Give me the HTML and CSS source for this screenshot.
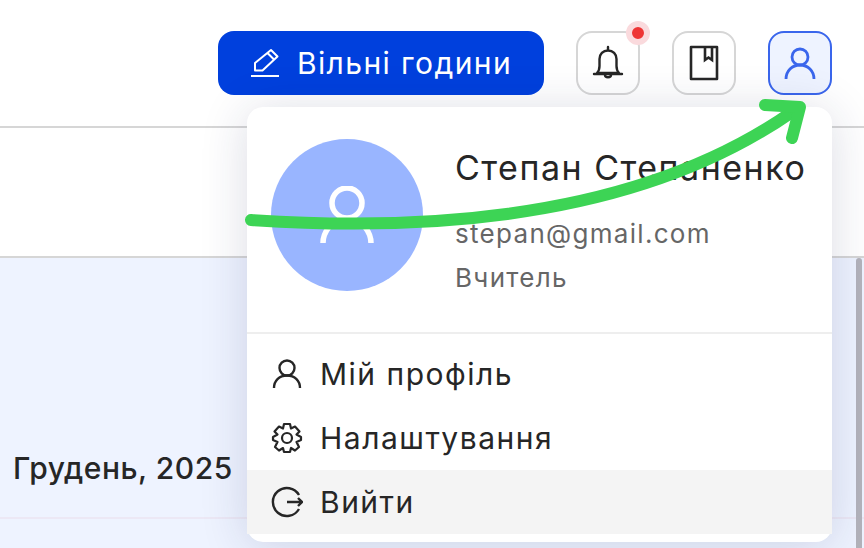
FILE: index.html

```html
<!DOCTYPE html>
<html lang="uk">

<head>
  <meta charset="UTF-8" />
  <meta name="viewport" content="width=device-width, initial-scale=1.0" />
  <title>Профіль</title>
  <link rel="stylesheet" href="styles.css">
</head>

<body>
  <header class="topbar">
    <button class="free-hours">
      <svg class="free-hours-icon" viewBox="0 0 30 30" fill="none" stroke="#fff" stroke-width="2">
        <path d="M1 28H29" />
        <path d="M5 22.500V15L21 2L27.500 8.500L12.500 22.500ZM17.500 5L24 11.500" stroke-linejoin="round" />
      </svg>
      Вільні години
    </button>
    <button class="icon-btn">
      <svg viewBox="0 0 32 36" width="32" height="36" fill="none" stroke="#262626" stroke-width="2.400">
        <path d="M16 2V5M5 28C7 26 7.500 24 7.500 21V14C7.500 9 11 5.500 16 5.500S24.500 9 24.500 14V21C24.500 24 25 26 27 28ZM2 29H30" stroke-linecap="round" stroke-linejoin="round" />
        <path d="M13 30C13 33 19 33 19 30" />
      </svg>
      <span class="dot"></span>
    </button>
    <button class="icon-btn">
      <svg viewBox="0 0 30 36" width="30" height="36" fill="none" stroke="#262626" stroke-width="2.600">
        <path d="M2 2H28V34H2Z" stroke-linejoin="round" />
        <path d="M16 2V15L19.500 12.500L23 15V2" />
      </svg>
    </button>
    <button class="icon-btn active">
      <svg viewBox="0 0 32 32" width="32" height="32" fill="none" stroke="#3a66ec" stroke-width="2.800">
        <circle cx="16" cy="10" r="8" />
        <path d="M2 32C2 24 8 18 16 18S30 24 30 32" />
      </svg>
    </button>
  </header>

  <div class="subbar"></div>

  <main class="content">
    <h2 class="month">Грудень, 2025</h2>
  </main>

  <div class="scrollbar"></div>

  <div class="menu">
    <div class="menu-user">
      <div class="avatar">
        <svg viewBox="0 0 54 58" width="54" height="58" fill="none" stroke="#fff" stroke-width="5.500">
          <circle cx="27" cy="17" r="15" />
          <path d="M3 57C3 48 10 33 27 33S51 48 51 57" />
        </svg>
      </div>
      <div class="user-info">
        <div class="user-name">Степан Степаненко</div>
        <div class="user-line">stepan@gmail.com</div>
        <div class="user-line">Вчитель</div>
      </div>
    </div>
    <div class="menu-list">
      <a class="menu-item">
        <svg viewBox="0 0 32 32" width="32" height="32" fill="none" stroke="#262626" stroke-width="2.400">
          <circle cx="16" cy="10" r="7.500" />
          <path d="M3 30C3 23 8 17.500 16 17.500S29 23 29 30" />
        </svg>
        Мій профіль
      </a>
      <a class="menu-item">
        <svg viewBox="0 0 32 32" width="32" height="32" fill="none" stroke="#262626" stroke-width="2.200" stroke-linejoin="round">
          <circle cx="16" cy="16" r="5" />
          <path d="M13 2H19L20 6.500L24 4.500L28.500 9.500L25.500 12.500L30 15V18L25.500 20L28 25L24 28.500L20 26L19 30H13L12 26L8 28.500L4 25L6.500 20L2 18V15L6.500 12.500L3.500 9.500L8 4.500L12 6.500Z" />
        </svg>
        Налаштування
      </a>
      <a class="menu-item hover">
        <svg viewBox="0 0 32 32" width="32" height="32" fill="none" stroke="#262626" stroke-width="2.400">
          <path d="M28 9A14 14 0 1 0 28 23" />
          <path d="M16 16H31M27 12L31 16L27 20" />
        </svg>
        Вийти
      </a>
    </div>
  </div>

  <svg class="arrow" viewBox="0 0 864 548" fill="none" stroke="#3dd455" stroke-width="12" stroke-linecap="round" stroke-linejoin="round">
    <path d="M251 220C430 232 640 218 792 112" />
    <path d="M765 105L800 107L792 138" />
  </svg>
</body>

</html>
```

FILE: styles.css

```css
* {
  box-sizing: border-box;
}

body {
  margin: 0;
  padding: 0;
  height: 548px;
  overflow: hidden;
  display: flex;
  flex-direction: column;
  font-family: "Inter", "Noto Sans", sans-serif;
  background: #fff;
  color: #262626;
}

.topbar {
  height: 128px;
  padding: 31px 32px 0 0;
  display: flex;
  justify-content: flex-end;
  align-items: flex-start;
  gap: 32px;
  border-bottom: 2px solid #d6d6d6;
}

.free-hours {
  width: 326px;
  height: 64px;
  display: flex;
  align-items: center;
  justify-content: center;
  gap: 17px;
  padding: 0;
  background: #0040dd;
  color: #fff;
  border: none;
  border-radius: 16px;
  font-family: inherit;
  font-size: 30px;
  letter-spacing: 1.4px;
}

.free-hours-icon {
  width: 30px;
  height: 30px;
}

.icon-btn {
  position: relative;
  width: 64px;
  height: 64px;
  display: flex;
  align-items: center;
  justify-content: center;
  padding: 0;
  background: #fff;
  border: 2px solid #d6d6d6;
  border-radius: 16px;
}

.icon-btn.active {
  background: #eef3ff;
  border-color: #3a66ec;
}

.dot {
  position: absolute;
  top: -12px;
  right: -12px;
  width: 12px;
  height: 12px;
  box-sizing: content-box;
  background: #ee3535;
  border: 6px solid #fadadd;
  border-radius: 50%;
}

.subbar {
  height: 130px;
  border-bottom: 2px solid #d6d6d6;
}

.content {
  flex: 1;
  background: #eef3ff;
  padding-top: 190px;
}

.month {
  margin: 0;
  padding: 0 0 27px 13px;
  height: 71px;
  font-size: 30px;
  font-weight: 500;
  line-height: 40px;
  letter-spacing: 0.5px;
  border-bottom: 2px solid #ece8f5;
}

.scrollbar {
  position: absolute;
  top: 258px;
  right: 2px;
  width: 6px;
  height: 290px;
  background: #b3b3bb;
  border-radius: 3px 3px 0 0;
}

.menu {
  position: absolute;
  top: 107px;
  left: 247px;
  width: 585px;
  height: 435px;
  background: #fff;
  border-radius: 16px;
  box-shadow: 0 4px 48px rgba(30, 40, 90, 0.16);
}

.menu-user {
  height: 227px;
  padding: 32px 24px 0;
  display: flex;
  gap: 32px;
  border-bottom: 2px solid #eeeeee;
}

.avatar {
  flex: none;
  width: 152px;
  height: 152px;
  display: flex;
  align-items: center;
  justify-content: center;
  background: #99b5ff;
  border-radius: 50%;
}

.user-info {
  padding-top: 5px;
  white-space: nowrap;
}

.user-name {
  font-size: 34px;
  line-height: 48px;
  letter-spacing: 1.5px;
  margin-bottom: 20px;
}

.user-line {
  font-size: 26px;
  line-height: 44px;
  letter-spacing: 1.3px;
  color: #666;
}

.menu-list {
  padding-top: 8px;
}

.menu-item {
  height: 64px;
  padding: 0 24px;
  display: flex;
  align-items: center;
  gap: 17px;
  font-size: 30px;
  letter-spacing: 1.5px;
}

.menu-item.hover {
  background: #f4f4f4;
}

.arrow {
  position: absolute;
  top: 0;
  left: 0;
  width: 864px;
  height: 548px;
  pointer-events: none;
}
```
